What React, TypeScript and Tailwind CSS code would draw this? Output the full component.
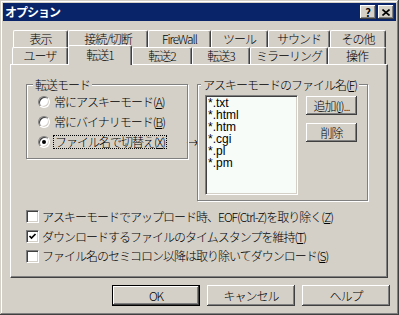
import React from "react";

const raised =
  "bg-[#d4d0c8] shadow-[inset_-1px_-1px_0_#404040,inset_1px_1px_0_#ffffff,inset_-2px_-2px_0_#808080,inset_2px_2px_0_#d4d0c8]";
const sunken =
  "border-t border-l border-[#808080] border-b-white border-r-white border-b border-r shadow-[inset_1px_1px_0_#404040,inset_-1px_-1px_0_#d4d0c8]";
const etched =
  "border border-[#808080] shadow-[1px_1px_0_#ffffff,inset_1px_1px_0_#ffffff]";

function Mn({ k }: { k: string }) {
  return (
    <span>
      (<span className="underline underline-offset-[1px]">{k}</span>)
    </span>
  );
}

const row1 = [
  { label: "表示", w: "w-[55px]" },
  { label: "接続/切断", w: "w-[80px]" },
  { label: "FireWall", w: "w-[63px]" },
  { label: "ツール", w: "w-[57px]" },
  { label: "サウンド", w: "w-[62px]" },
  { label: "その他", w: "w-[56px]" },
];

const row2 = [
  { label: "ユーザ", w: "w-[56px]" },
  { label: "転送1", w: "w-[64px]", active: true },
  { label: "転送2", w: "w-[60px]" },
  { label: "転送3", w: "w-[58px]" },
  { label: "ミラーリング", w: "w-[78px]" },
  { label: "操作", w: "w-[58px]" },
];

function Tab({ label, w, active }: { label: string; w: string; active?: boolean }) {
  return (
    <div
      className={`${w} ${
        active ? "h-[20px] -mt-[2px] relative z-10 bg-[#d4d0c8] pb-[2px]" : "h-[17px]"
      } flex items-center justify-center whitespace-nowrap rounded-tl-[2px] rounded-tr-[2px] border-t border-l border-white border-r border-r-[#404040] shadow-[inset_-1px_0_0_#808080]`}
    >
      {label}
    </div>
  );
}

function Radio({ checked }: { checked?: boolean }) {
  return (
    <div className="w-[12px] h-[12px] rounded-full bg-white border border-t-[#808080] border-l-[#808080] border-b-white border-r-white shadow-[inset_1px_1px_0_#404040,inset_-1px_-1px_0_#d4d0c8] flex items-center justify-center shrink-0">
      {checked && <div className="w-[4px] h-[4px] rounded-full bg-black" />}
    </div>
  );
}

function Check({ checked }: { checked?: boolean }) {
  return (
    <div className={`w-[13px] h-[13px] bg-white ${sunken} flex items-center justify-center shrink-0`}>
      {checked && (
        <svg width="9" height="9" viewBox="0 0 9 9">
          <polyline points="1.5,4 3.5,6 7.5,2" fill="none" stroke="#000" strokeWidth="1.7" />
        </svg>
      )}
    </div>
  );
}

export default function App() {
  return (
    <div className="w-[399px] h-[315px] bg-[#d4d0c8] p-[3px] text-[12px] leading-[12px] tracking-[-1px] font-light text-black font-['Noto_Sans_CJK_JP',sans-serif] shadow-[inset_-1px_-1px_0_#404040,inset_1px_1px_0_#d4d0c8,inset_-2px_-2px_0_#808080,inset_2px_2px_0_#ffffff] flex flex-col">
      {/* title bar */}
      <div className="h-[18px] bg-[#0a246a] flex items-center pl-[2px] pr-[2px] shrink-0">
        <span className="text-white font-bold flex-1">オプション</span>
        <div className={`w-[16px] h-[14px] ${raised} flex items-center justify-center font-bold text-[11px] tracking-normal`}>
          ?
        </div>
        <div className={`w-[16px] h-[14px] ml-[2px] ${raised} flex items-center justify-center`}>
          <svg width="8" height="7" viewBox="0 0 8 7">
            <path d="M0.5 0.5 L7.5 6.5 M7.5 0.5 L0.5 6.5" stroke="#000" strokeWidth="1.6" />
          </svg>
        </div>
      </div>

      <div className="flex flex-col pl-[7px] pr-[8px] pt-[9px]">
        {/* tabs */}
        <div className="flex pl-[3px] h-[17px]">
          {row1.map((t) => (
            <Tab key={t.label} {...t} />
          ))}
        </div>
        <div className="flex items-start pl-[2px] h-[17px]">
          {row2.map((t) => (
            <Tab key={t.label} {...t} />
          ))}
        </div>

        {/* panel */}
        <div className="h-[214px] border-t border-l border-white border-b border-r border-b-[#404040] border-r-[#404040] shadow-[inset_-1px_-1px_0_#808080] pl-[15px] pt-[19px] flex flex-col">
          <div className="flex items-start">
            {/* 転送モード */}
            <div className={`relative w-[162px] h-[75px] ${etched} pl-[11px] pt-[7px] flex flex-col`}>
              <span className="absolute left-[6px] -top-[6px] px-[2px] bg-[#d4d0c8] whitespace-nowrap">転送モード</span>
              <div className="h-[20px] flex items-center gap-[4px] whitespace-nowrap">
                <Radio />
                <span>
                  常にアスキーモード<Mn k="A" />
                </span>
              </div>
              <div className="h-[20px] flex items-center gap-[4px] whitespace-nowrap">
                <Radio />
                <span>
                  常にバイナリモード<Mn k="B" />
                </span>
              </div>
              <div className="h-[20px] flex items-center gap-[3px] whitespace-nowrap">
                <Radio checked />
                <span className="border border-dotted border-black px-[1px]">
                  ファイル名で切替え<Mn k="X" />
                </span>
              </div>
            </div>

            <div className="w-[9px] mt-[53px] flex justify-center overflow-visible">
              <span className="tracking-normal">→</span>
            </div>

            {/* ファイル名 */}
            <div className={`relative w-[171px] h-[117px] ${etched} pl-[7px] pt-[10px] flex items-start gap-[8px]`}>
              <span className="absolute left-[3px] -top-[6px] px-[2px] bg-[#d4d0c8] whitespace-nowrap">
                アスキーモードのファイル名<Mn k="F" />
              </span>
              <div className={`w-[93px] h-[100px] bg-[#f8fcf8] ${sunken} pl-[2px] pt-[1px] flex flex-col font-['Liberation_Sans',sans-serif] font-normal tracking-normal`}>
                {["*.txt", "*.html", "*.htm", "*.cgi", "*.pl", "*.pm"].map((f) => (
                  <div key={f} className="h-[12px] leading-[12px]">
                    {f}
                  </div>
                ))}
              </div>
              <div className="flex flex-col gap-[8px] pt-[1px]">
                <div className={`w-[51px] h-[19px] ${raised} flex items-center justify-center whitespace-nowrap`}>
                  <span>
                    追加<Mn k="I" />...
                  </span>
                </div>
                <div className={`w-[51px] h-[19px] ${raised} flex items-center justify-center`}>
                  削除
                </div>
              </div>
            </div>
          </div>

          {/* checkboxes */}
          <div className="flex flex-col mt-[5px] whitespace-nowrap">
            <div className="h-[21px] flex items-center gap-[3px]">
              <Check />
              <span>
                アスキーモードでアップロード時、EOF(Ctrl-Z)を取り除く<Mn k="Z" />
              </span>
            </div>
            <div className="h-[19px] flex items-center gap-[3px]">
              <Check checked />
              <span>
                ダウンロードするファイルのタイムスタンプを維持<Mn k="T" />
              </span>
            </div>
            <div className="h-[20px] flex items-center gap-[3px]">
              <Check />
              <span>
                ファイル名のセミコロン以降は取り除いてダウンロード<Mn k="S" />
              </span>
            </div>
          </div>
        </div>

        {/* buttons */}
        <div className="flex justify-end gap-[7px] mt-[7px] -mr-[2px]">
          <div className="w-[88px] h-[21px] border border-black">
            <div className={`w-full h-full ${raised} flex items-center justify-center`}>OK</div>
          </div>
          <div className={`w-[88px] h-[21px] ${raised} flex items-center justify-center`}>キャンセル</div>
          <div className={`w-[88px] h-[21px] ${raised} flex items-center justify-center`}>ヘルプ</div>
        </div>
      </div>
    </div>
  );
}
